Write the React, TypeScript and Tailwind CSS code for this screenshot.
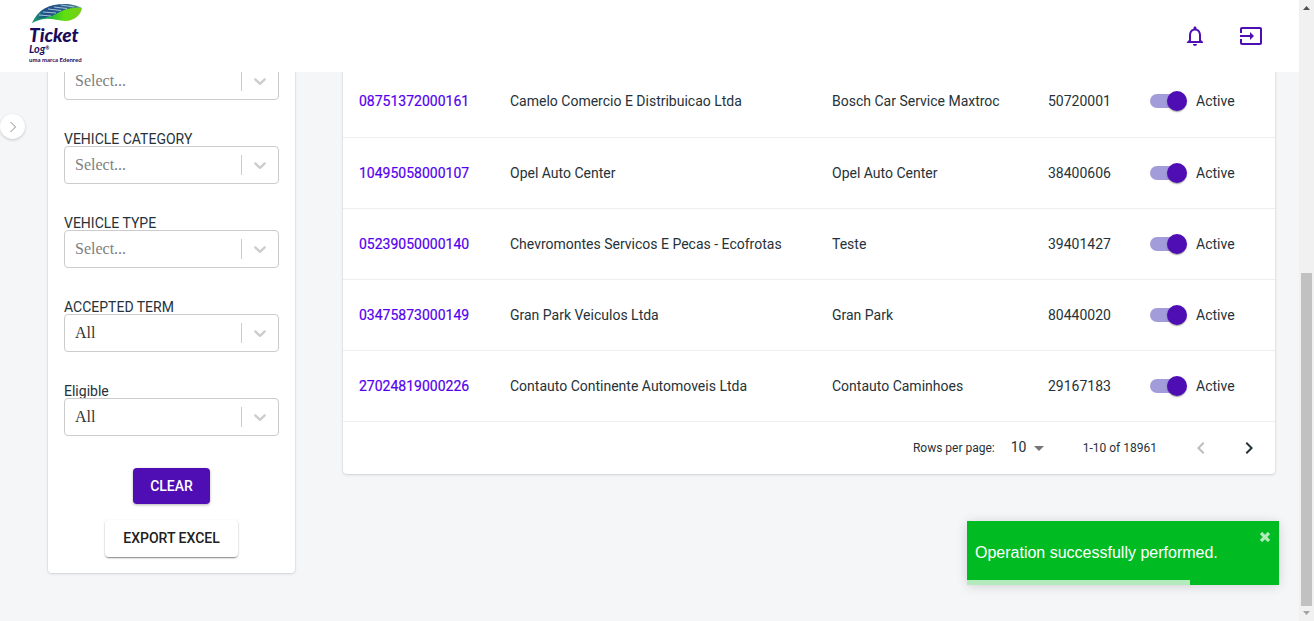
import { MdChevronLeft, MdChevronRight, MdArrowDropDown } from "react-icons/md";

const filters = [
  { id: "vehicle", label: "", value: "Select..." },
  { id: "category", label: "VEHICLE CATEGORY", value: "Select..." },
  { id: "type", label: "VEHICLE TYPE", value: "Select..." },
  { id: "term", label: "ACCEPTED TERM", value: "All" },
  { id: "eligible", label: "Eligible", value: "All" },
];

const rows = [
  ["08751372000161", "Camelo Comercio E Distribuicao Ltda", "Bosch Car Service Maxtroc", "50720001"],
  ["10495058000107", "Opel Auto Center", "Opel Auto Center", "38400606"],
  ["05239050000140", "Chevromontes Servicos E Pecas - Ecofrotas", "Teste", "39401427"],
  ["03475873000149", "Gran Park Veiculos Ltda", "Gran Park", "80440020"],
  ["27024819000226", "Contauto Continente Automoveis Ltda", "Contauto Caminhoes", "29167183"],
];

const cardShadow = "shadow-[0_0_0_1px_rgba(63,63,68,0.05),0_1px_3px_0_rgba(63,63,68,0.15)]";

function Logo() {
  return (
    <svg width="60" height="64" viewBox="0 0 60 64" role="img" aria-label="Ticket Log">
      <defs>
        <linearGradient id="leaf" x1="0" y1="0" x2="1" y2="0">
          <stop offset="0" stopColor="#008f6a" />
          <stop offset="0.3" stopColor="#12b04a" />
          <stop offset="0.65" stopColor="#5fe00e" />
          <stop offset="1" stopColor="#7ccb1e" />
        </linearGradient>
        <linearGradient id="vein" x1="0" y1="0" x2="1" y2="0">
          <stop offset="0" stopColor="#1fa56c" />
          <stop offset="0.25" stopColor="#1f4f88" />
          <stop offset="0.7" stopColor="#2d5f8c" />
          <stop offset="1" stopColor="#5aa870" />
        </linearGradient>
      </defs>
      <path d="M4 23 C10 14 20 8 32 7 C40 6 48 7 54 8 C53 15 46 21 37 21 C27 21 19 15 4 23Z" fill="url(#leaf)" />
      <path d="M4 23 C10 9 22 4 36 4 C44 4 50 6 54 8 C44 7 36 9 28 14 C21 18 12 17 4 23Z" fill="url(#vein)" />
      <path d="M11 15L23 16M15 12L28 13M20 9L33 10.500M26 7L39 8.500M33 5L46 7" stroke="#b6cde0" strokeWidth="0.9" />
      <text x="1" y="42" fontFamily="Lato, sans-serif" fontSize="19" fontWeight="900" fontStyle="italic" fill="#1b0b5c">Ticket</text>
      <text x="1" y="53" fontFamily="Lato, sans-serif" fontSize="11" fontWeight="700" fontStyle="italic" fill="#1b0b5c">Log<tspan dy="-3" fontSize="5">®</tspan></text>
      <text x="1" y="62" fontFamily="Lato, sans-serif" fontSize="6" fontWeight="700" fill="#1b0b5c">uma marca Edenred</text>
    </svg>
  );
}

function Field({ id, label, value }: { id: string; label: string; value: string }) {
  const empty = value === "Select...";
  return (
    <div>
      <label htmlFor={id} className="block h-4 text-sm leading-[18px] text-[#263238]">
        {label}
      </label>
      <div className="relative">
        <select
          id={id}
          aria-label={label || "Vehicle"}
          className={`block h-[38px] w-full appearance-none rounded border border-[#cccccc] bg-white px-[10px] font-['Liberation_Serif',serif] text-base ${empty ? "text-[#808080]" : "text-[#333333]"}`}
        >
          <option>{value}</option>
        </select>
        <span className="pointer-events-none absolute inset-y-0 right-px flex items-center">
          <span className="h-5 w-px bg-[#cccccc]" />
          <svg className="mx-2 h-5 w-5" viewBox="0 0 20 20" fill="#cccccc">
            <path d="M4.516 7.548c0.436-0.446 1.043-0.481 1.576 0l3.908 3.747 3.908-3.747c0.533-0.481 1.141-0.446 1.574 0 0.436 0.445 0.408 1.197 0 1.615-0.406 0.418-4.695 4.502-4.695 4.502-0.217 0.223-0.502 0.335-0.787 0.335s-0.57-0.112-0.789-0.335c0 0-4.287-4.084-4.695-4.502s-0.436-1.17 0-1.615z" />
          </svg>
        </span>
      </div>
    </div>
  );
}

function Switch({ name }: { name: string }) {
  return (
    <label className="flex items-center gap-[9px]">
      <span className="relative flex h-5 w-[37px] items-center">
        <input type="checkbox" defaultChecked aria-label={`${name} active`} className="h-[14px] w-[34px] appearance-none rounded-full bg-[#a39cdb]" />
        <span className="pointer-events-none absolute right-0 h-5 w-5 rounded-full bg-[#4f0eb4] shadow-[0_2px_1px_-1px_rgba(0,0,0,0.2),0_1px_1px_0_rgba(0,0,0,0.14),0_1px_3px_0_rgba(0,0,0,0.12)]" />
      </span>
      Active
    </label>
  );
}

export default function App() {
  return (
    <div className="flex h-screen overflow-hidden bg-[#f4f6f8] font-[Roboto,sans-serif] text-sm text-[#263238]">
      <div className="relative flex min-w-0 flex-1 flex-col">
        <header className="z-10 flex h-[72px] shrink-0 items-center justify-between bg-white pr-9 pl-7">
          <a href="#home" className="self-start">
            <Logo />
          </a>
          <div className="flex items-center gap-8 text-[#4f0eb4]">
            <button aria-label="Notifications">
              <svg width="24" height="24" viewBox="0 0 24 24" fill="currentColor">
                <path d="M12 22c1.1 0 2-.9 2-2h-4c0 1.1.9 2 2 2zm6-6v-5c0-3.07-1.63-5.64-4.5-6.32V4c0-.83-.67-1.5-1.5-1.5s-1.5.67-1.5 1.5v.68C7.64 5.36 6 7.92 6 11v5l-2 2v1h16v-1l-2-2zm-2 1H8v-6c0-2.48 1.51-4.5 4-4.5s4 2.02 4 4.500v6z" />
              </svg>
            </button>
            <button aria-label="Sign out">
              <svg width="24" height="24" viewBox="0 0 24 24" fill="currentColor">
                <path d="M21 3.010H3c-1.1 0-2 .9-2 2V9h2V4.990h18v14.030H3V15H1v4.010c0 1.100.9 1.980 2 1.980h18c1.100 0 2-.880 2-1.980v-14c0-1.110-.9-2-2-2zM11 16l4-4-4-4v3H1v2h10v3z" />
              </svg>
            </button>
          </div>
        </header>

        <main className="min-h-0 flex-1 overflow-hidden">
          <div className="-mt-8 flex items-start gap-12 pr-6 pl-12">
            <aside className={`w-[247px] shrink-0 rounded bg-white px-4 pt-[6px] pb-4 ${cardShadow}`}>
              <form className="flex flex-col gap-[30px]">
                {filters.map((f) => (
                  <Field key={f.id} {...f} />
                ))}
              </form>
              <div className="mt-8 flex flex-col items-center gap-4">
                <button className="h-9 rounded bg-[#4f0eb4] px-[17px] font-medium text-white shadow-[0_1px_3px_rgba(0,0,0,0.3)]">CLEAR</button>
                <button className="h-[37px] rounded bg-white px-[18px] pb-px font-medium text-[#212121] shadow-[0_3px_1px_-2px_rgba(0,0,0,0.2),0_1px_2px_rgba(0,0,0,0.35)]">EXPORT EXCEL</button>
              </div>
            </aside>

            <section className={`min-w-0 flex-1 rounded bg-white pt-[26px] ${cardShadow}`}>
              <table className="w-full table-fixed text-left">
                <colgroup>
                  <col className="w-[151px]" />
                  <col />
                  <col className="w-[216px]" />
                  <col className="w-[102px]" />
                  <col className="w-[141px]" />
                </colgroup>
                <tbody>
                  {rows.map(([code, company, trade, zip]) => (
                    <tr key={code} className="h-[71px] border-b border-[#eeeeee]">
                      <td className="px-4">
                        <a href={`#${code}`} className="text-[#5500ee] [-webkit-text-stroke:0.2px]">
                          {code}
                        </a>
                      </td>
                      <td className="px-4">{company}</td>
                      <td className="px-4">{trade}</td>
                      <td className="pl-4">{zip}</td>
                      <td className="pl-4">
                        <Switch name={company} />
                      </td>
                    </tr>
                  ))}
                </tbody>
              </table>
              <div className="flex h-[52px] items-center justify-end pr-[2px] text-xs">
                <label htmlFor="page-size">Rows per page:</label>
                <div className="relative mr-9 ml-4 flex items-center">
                  <select id="page-size" className="h-6 w-9 appearance-none bg-transparent pb-[2px] text-sm">
                    <option>10</option>
                  </select>
                  <MdArrowDropDown className="pointer-events-none absolute -right-1 h-6 w-6 text-[#757575]" />
                </div>
                <span>1-10 of 18961</span>
                <div className="ml-5 flex">
                  <button aria-label="Previous page" disabled className="flex h-12 w-12 items-center justify-center text-[#bdbdbd]">
                    <MdChevronLeft className="h-6 w-6" />
                  </button>
                  <button aria-label="Next page" className="flex h-12 w-12 items-center justify-center">
                    <MdChevronRight className="h-6 w-6" />
                  </button>
                </div>
              </div>
            </section>
          </div>
        </main>

        <button aria-label="Open menu" className="absolute top-[114px] left-0 flex h-[25px] w-[25px] items-center justify-center rounded-full bg-white shadow-[0_1px_3px_rgba(0,0,0,0.2)]">
          <svg width="8" height="12" viewBox="0 0 8 12" fill="none" stroke="#8a8a8a" strokeWidth="1">
            <path d="M1.500 1l5 5-5 5" />
          </svg>
        </button>

        <div role="status" className="absolute right-5 bottom-9 flex h-16 w-[312px] items-center bg-[#00bc22] px-2 font-['Liberation_Sans',sans-serif] text-base text-white shadow-[0_1px_10px_0_rgba(0,0,0,0.1),0_2px_15px_0_rgba(0,0,0,0.05)]">
          Operation successfully performed.
          <button aria-label="Close" className="absolute top-2 right-2 flex h-4 w-3 items-center justify-center">
            <svg width="10" height="10" viewBox="0 0 10 10" stroke="#b3ebbd" strokeWidth="3.2">
              <path d="M1 1l8 8M9 1l-8 8" />
            </svg>
          </button>
          <span className="absolute bottom-0 left-0 h-[5px] w-[223px] bg-[#b3ebbd]" />
        </div>
      </div>

      <div aria-hidden="true" className="flex w-[15px] shrink-0 flex-col items-center bg-[#f1f1f1]">
        <svg width="15" height="15" viewBox="0 0 15 15" fill="#505050">
          <path d="M4 10L7.500 6L11 10Z" />
        </svg>
        <div className="flex flex-1 flex-col justify-end">
          <div className="h-[333px] w-[11px] bg-[#c1c1c1]" />
        </div>
        <svg width="15" height="15" viewBox="0 0 15 15" fill="#a3a3a3">
          <path d="M4 5L7.500 9L11 5Z" />
        </svg>
      </div>
    </div>
  );
}
